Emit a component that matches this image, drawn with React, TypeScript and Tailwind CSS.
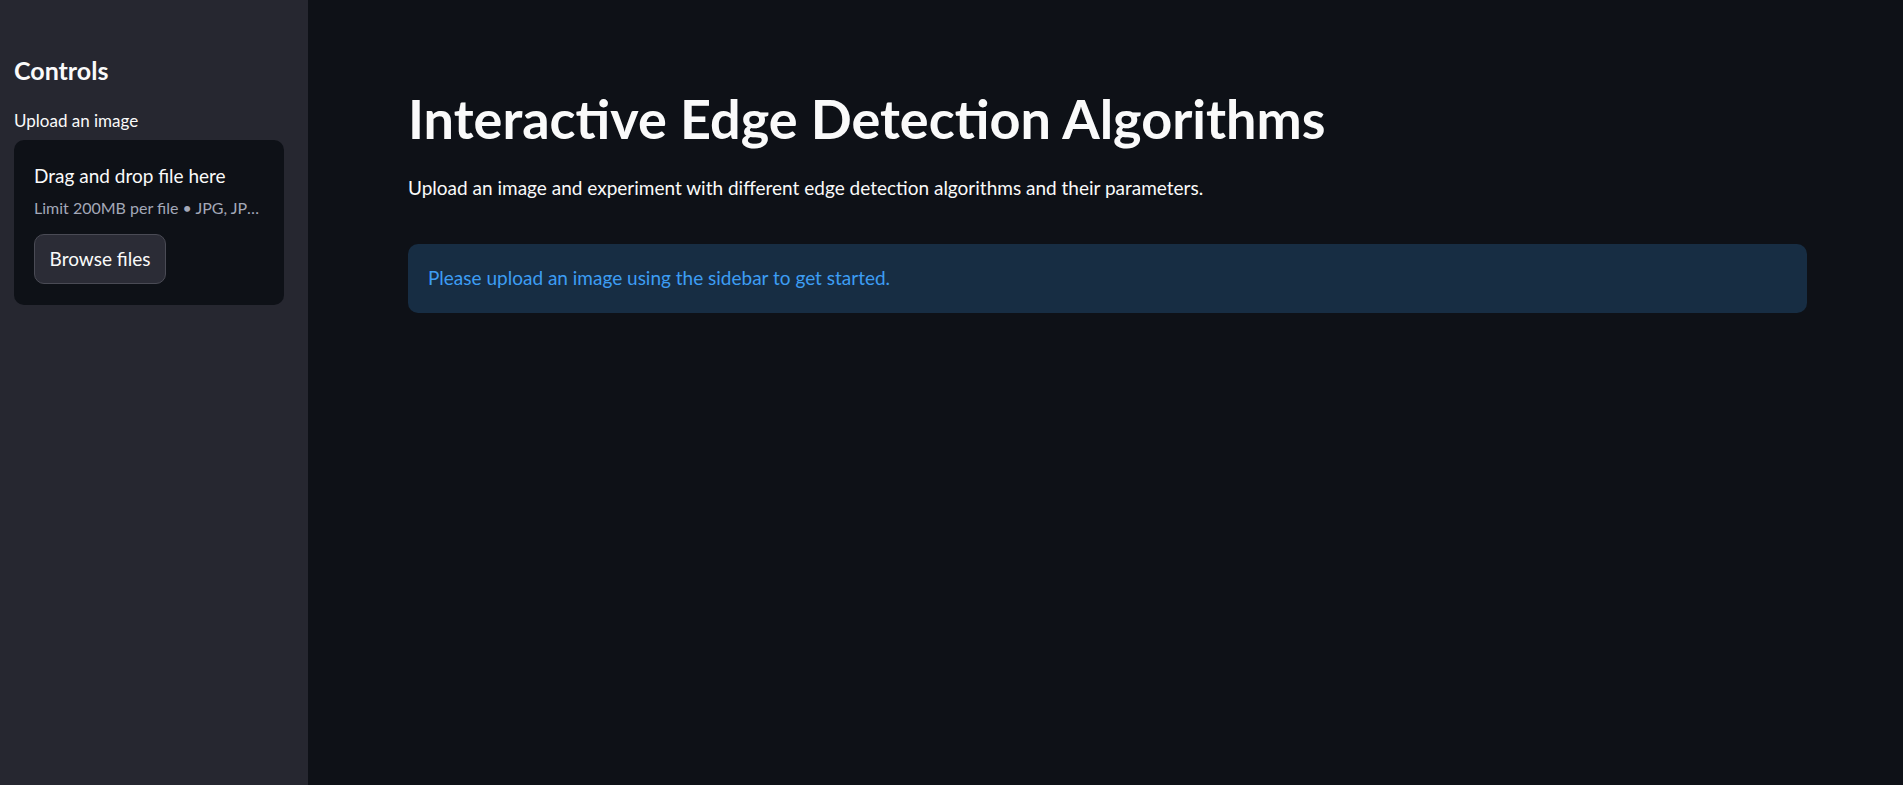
export default function App() {
  return (
    <div className="flex h-screen w-full overflow-hidden bg-[#0e1117] font-['Lato',sans-serif] text-[#fafafa]">
      {/* sidebar */}
      <aside className="w-[308px] shrink-0 bg-[#262730] pl-[14px] pr-[24px] pt-[55px]">
        <h2 className="text-[25px] font-bold leading-[30px]">Controls</h2>
        <p className="mt-[24px] text-[17px] leading-[24px]">Upload an image</p>
        <div className="mt-[7px] h-[165px] rounded-[10px] bg-[#0e1117] px-[20px] pt-[21px]">
          <p className="text-[19px] leading-[30px]">Drag and drop file here</p>
          <p className="mt-[5px] truncate text-[16px] leading-[24px] text-[#a3a8b8]">
            Limit 200MB per file • JPG, JPEG, PNG
          </p>
          <button className="mt-[14px] flex h-[50px] w-[132px] items-center justify-center rounded-[10px] border border-[#4a4b55] bg-[#2b2c36] text-[19px] text-[#fafafa]">
            Browse files
          </button>
        </div>
      </aside>

      {/* main */}
      <main className="flex-1 pl-[100px] pr-[96px] pt-[86px]">
        <h1 className="text-[54px] font-bold leading-[66px]">
          Interactive Edge Detection Algorithms
        </h1>
        <p className="mt-[21px] text-[19px] leading-[30px]">
          Upload an image and experiment with different edge detection algorithms and their parameters.
        </p>
        <div className="mt-[41px] flex h-[69px] items-center rounded-[10px] bg-[#172d43] px-[20px]">
          <p className="text-[19px] text-[#3d9df3]">Please upload an image using the sidebar to get started.</p>
        </div>
      </main>
    </div>
  )
}
